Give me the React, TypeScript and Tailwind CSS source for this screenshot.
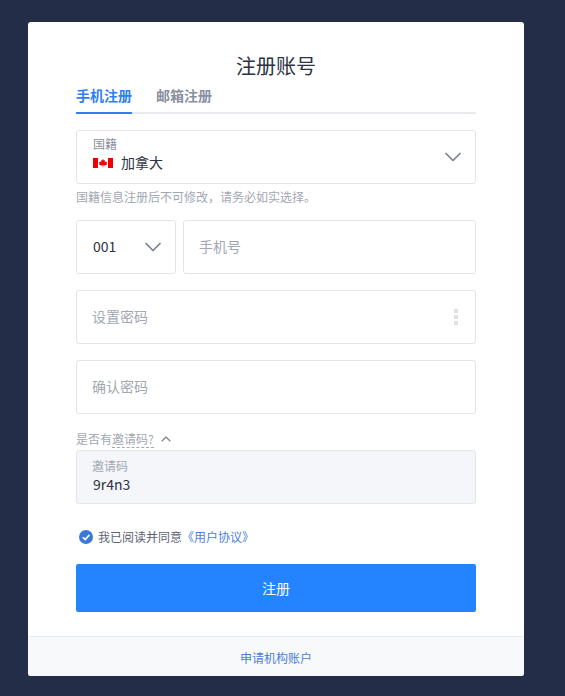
import { ChevronDown, ChevronUp } from 'lucide-react';

const font = { fontFamily: '"Noto Sans CJK SC", sans-serif' };

function CanadaFlag() {
  return (
    <svg width="20" height="10" viewBox="0 0 20 10" className="mt-[3px] shrink-0">
      <rect width="20" height="10" fill="#fff" />
      <rect width="5" height="10" fill="#f00000" />
      <rect x="15" width="5" height="10" fill="#f00000" />
      <path d="M10 .8 L11 2.7 L12.1 2.1 L11.7 4.5 L12.8 3.4 L14 4.6 L13.6 5.9 L14.2 6.2 L12 7.5 L10.3 7.3 L10.3 9.2 L9.7 9.2 L9.7 7.3 L8 7.5 L5.8 6.2 L6.4 5.9 L6 4.6 L7.2 3.4 L8.3 4.5 L7.9 2.1 L9 2.7 Z" fill="#f00000" />
    </svg>
  );
}

function Field({ placeholder, dots }: { placeholder: string; dots?: boolean }) {
  return (
    <div className="flex h-[54px] items-center justify-between rounded-[3px] border border-[#e3e4e8] pl-[15px] pr-[17px] text-[14px] text-[#a3a7b3]">
      <span className="-mt-[2px]">{placeholder}</span>
      {dots && (
        <div className="flex flex-col gap-[2px]">
          <span className="h-1 w-1 bg-[#dddfe3]" />
          <span className="h-1 w-1 bg-[#dddfe3]" />
          <span className="h-1 w-1 bg-[#dddfe3]" />
        </div>
      )}
    </div>
  );
}

export default function App() {
  return (
    <div className="flex h-[696px] w-[565px] overflow-hidden bg-[#232d47] pl-[28px] pt-[22px]" style={font}>
      <div className="flex h-[654px] w-[496px] flex-col overflow-hidden rounded-[3px] bg-white">
        <div className="flex flex-1 flex-col px-12">
          <h1 className="mt-[30px] h-[28px] text-center text-[20px] leading-[28px] text-[#2c3344]">注册账号</h1>

          <div className="flex h-[34px] gap-6 border-b-2 border-[#e9eaee] pt-[5px] text-[14px] font-bold leading-[20px]">
            <div className="relative text-[#2f80ed]">
              手机注册
              <span className="absolute -bottom-[2px] left-0 h-[2px] w-full bg-[#2f80ed]" />
            </div>
            <div className="text-[#8a8f9f]">邮箱注册</div>
          </div>

          <div className="mt-4 flex h-[54px] items-center justify-between rounded-[3px] border border-[#e3e4e8] pl-4 pr-2">
            <div className="pb-2">
              <div className="text-[12px] leading-[17px] text-[#8a8f9f]">国籍</div>
              <div className="flex items-center gap-2 text-[14px] leading-[20px] text-[#2c3344]">
                <CanadaFlag />
                加拿大
              </div>
            </div>
            <ChevronDown size={28} strokeWidth={1.5} className="text-[#7c8190]" />
          </div>
          <p className="mt-[3px] text-[12px] leading-[20px] text-[#a3a7b3]">国籍信息注册后不可修改，请务必如实选择。</p>

          <div className="mt-[13px] flex gap-[7px]">
            <div className="flex h-[54px] w-[100px] shrink-0 items-center justify-between rounded-[3px] border border-[#e3e4e8] pl-4 pr-2 text-[14px] text-[#2c3344]">
              <span className="-mt-[2px]">001</span>
              <ChevronDown size={28} strokeWidth={1.5} className="text-[#7c8190]" />
            </div>
            <div className="flex-1">
              <Field placeholder="手机号" />
            </div>
          </div>

          <div className="mt-4">
            <Field placeholder="设置密码" dots />
          </div>
          <div className="mt-4">
            <Field placeholder="确认密码" />
          </div>

          <div className="mb-px mt-[15px] flex h-[20px] items-center gap-[4px] text-[12px] text-[#a3a7b3]">
            <span>
              是否有
              <span className="border-b border-dashed border-[#a3a7b3]">邀请码?</span>
            </span>
            <ChevronUp size={16} strokeWidth={1.75} className="text-[#7c8190]" />
          </div>

          <div className="flex h-[54px] flex-col justify-center rounded-[3px] border border-[#e3e4e8] bg-[#f5f6f9] pb-1 pl-[15px]">
            <div className="text-[12px] leading-[17px] text-[#a3a7b3]">邀请码</div>
            <div className="pl-px text-[14px] leading-[20px] text-[#2c3344]">9r4n3</div>
          </div>

          <div className="mt-[24px] flex h-[18px] items-center pl-[3px] text-[12px] text-[#5c6272]">
            <svg width="14" height="14" viewBox="0 0 14 14" className="mr-[5px] shrink-0">
              <circle cx="7" cy="7" r="7" fill="#3a78dc" />
              <path d="M3.8 7.2 L6.2 9.6 L10.4 4.9" fill="none" stroke="#fff" strokeWidth="1.6" />
            </svg>
            我已阅读并同意
            <span className="text-[#4a7fd6]">《用户协议》</span>
          </div>

          <button className="mt-[18px] h-[48px] w-full rounded-[2px] bg-[#2484ff] text-[14px] text-white">注册</button>
        </div>

        <div className="flex h-[40px] items-center justify-center border-t border-[#e9eaee] bg-[#f8f9fb] pt-[2px] text-[12px] text-[#4a7fd6]">
          申请机构账户
        </div>
      </div>
    </div>
  );
}
